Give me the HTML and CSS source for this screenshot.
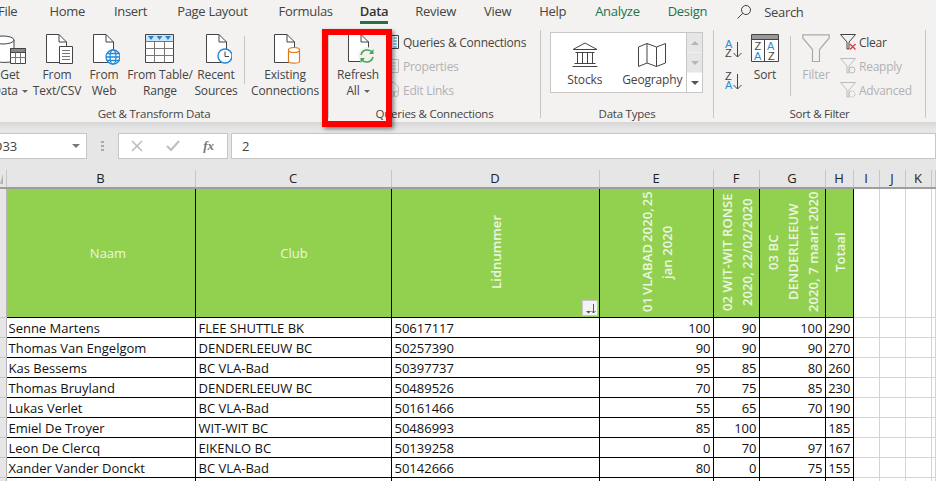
FILE: index.html
```html
<!DOCTYPE html>
<html lang="en">
<head>
  <meta charset="UTF-8">
  <title>Data tab - Excel</title>
  <link rel="stylesheet" href="styles.css">
</head>
<body>

<nav class="tabs">
  <span>File</span>
  <span class="push4">Home</span>
  <span class="push1">Insert</span>
  <span class="push2">Page Layout</span>
  <span class="push3">Formulas</span>
  <span class="active pull1">Data</span>
  <span class="pull1">Review</span>
  <span>View</span>
  <span>Help</span>
  <span class="green push1">Analyze</span>
  <span class="green">Design</span>
  <span class="search">
    <svg width="16" height="16" viewBox="0 0 16 16" fill="none" stroke="#444"><circle cx="10" cy="6" r="4.5"/><path d="M6.700 9.300L1.500 14.500"/></svg>
    Search
  </span>
</nav>

<section class="ribbon">
  <div class="group group-get">
    <div class="group-body">
      <div class="big w-get">
        <svg width="32" height="32" viewBox="0 0 32 32" fill="#fff" stroke="#444">
          <path d="M-1 7V27C4 30 14 30 20 28V7"/><ellipse cx="9" cy="7" rx="11" ry="4"/>
          <path d="M16.500 15.500H31.500V30.500H16.500Z"/><path d="M16.500 15.500H31.500V19.500H16.500Z" fill="#888"/><path d="M16.500 24.500H31.500M21.500 19.500V30.500M26.500 19.500V30.500" stroke="#777"/>
        </svg>
        <span>Get<br>Data <i class="caret"></i></span>
      </div>
      <div class="big w-text">
        <svg width="32" height="32" viewBox="0 0 32 32" fill="#fff" stroke="#444">
          <path d="M5.500 1.500H18L25.500 9V29.500H5.500Z"/><path d="M18 1.500V9H25.500" fill="none"/>
          <path d="M18.500 13.500H31.500V30.500H18.500Z"/><path d="M21 17.500H29M21 20.500H29M21 23.500H29M21 26.500H29" stroke="#777"/>
        </svg>
        <span>From<br>Text/CSV</span>
      </div>
      <div class="big w-web">
        <svg width="32" height="32" viewBox="0 0 32 32" fill="#fff" stroke="#444">
          <path d="M5.500 1.500H18L25.500 9V29.500H5.500Z"/><path d="M18 1.500V9H25.500" fill="none"/>
          <g stroke="#1e88d8" stroke-width="1.300"><circle cx="25" cy="24" r="7"/><ellipse cx="25" cy="24" rx="3" ry="7"/><path d="M18 24H32M19 20.500H31M19 27.500H31"/></g>
        </svg>
        <span>From<br>Web</span>
      </div>
      <div class="big w-table">
        <svg width="32" height="32" viewBox="0 0 32 32" fill="#fff" stroke="#444">
          <path d="M1.500 1.500H29.500V29.500H1.500Z"/><path d="M2 2H29V8H2Z" fill="#cfe6f7" stroke="none"/>
          <path d="M4 3H10L7 7ZM12.500 3H18.500L15.500 7ZM21 3H27L24 7Z" fill="#1e88d8" stroke="none"/>
          <path d="M1.500 8.500H29.500M1.500 15.500H29.500M1.500 22.500H29.500M10.500 8.500V29.500M20.500 8.500V29.500" stroke="#777"/>
        </svg>
        <span>From Table/<br>Range</span>
      </div>
      <div class="big w-recent">
        <svg width="32" height="32" viewBox="0 0 32 32" fill="#fff" stroke="#444">
          <path d="M6.500 1.500H19L26.500 9V29.500H6.500Z"/><path d="M19 1.500V9H26.500" fill="none"/>
          <circle cx="25" cy="23" r="7" stroke="#1e88d8" stroke-width="1.400"/><path d="M25 18.500V23.500H29" fill="none"/>
        </svg>
        <span>Recent<br>Sources</span>
      </div>
      <div class="thin-sep"></div>
      <div class="big w-exist">
        <svg width="32" height="32" viewBox="0 0 32 32" fill="#fff" stroke="#444">
          <path d="M5.500 1.500H18L25.500 9V29.500H5.500Z"/><path d="M18 1.500V9H25.500" fill="none"/>
          <g stroke="#e0781e" stroke-width="1.200"><path d="M19.500 17V29C20.500 30.500 29.500 30.500 30.500 29V17"/><ellipse cx="25" cy="17" rx="5.500" ry="2.500"/></g>
        </svg>
        <span>Existing<br>Connections</span>
      </div>
    </div>
    <div class="group-label">Get &amp; Transform Data</div>
  </div>

  <div class="group group-queries">
    <div class="group-body">
      <div class="big w-refresh">
        <svg width="32" height="32" viewBox="0 0 32 32" fill="#fff" stroke="#444">
          <path d="M6.500 1.500H19L26.500 9V28.500H6.500Z"/><path d="M19 1.500V9H26.500" fill="none"/>
          <circle cx="25" cy="23" r="9" fill="#f3f2f1" stroke="none"/>
          <g fill="none" stroke="#3fa64f" stroke-width="1.500"><path d="M19 22A6.500 6.500 0 0 1 30.500 19.500M31 24A6.500 6.500 0 0 1 19.500 26.500"/></g>
          <path d="M31.500 16V21H27ZM18.500 30V25H23Z" fill="#3fa64f" stroke="none"/>
        </svg>
        <span>Refresh<br>All <i class="caret"></i></span>
      </div>
      <div class="small-col">
        <div class="small">
          <svg width="14" height="14" viewBox="0 0 14 14" fill="#fff" stroke="#444"><path d="M.500 .500H12.500V13.500H.500Z"/><path d="M7.500 3H11M7.500 6H11M7.500 9H11M7.500 12H11" stroke="#1e88d8"/></svg>
          Queries &amp; Connections
        </div>
        <div class="small off">
          <svg width="14" height="14" viewBox="0 0 14 14" fill="none" stroke="#bbb"><path d="M.500 .500H12.500V13.500H.500Z"/><path d="M4 4H10M4 7H10M4 10H10"/></svg>
          Properties
        </div>
        <div class="small off">
          <svg width="14" height="16" viewBox="0 0 14 16" fill="none" stroke="#bbb"><path d="M1.500 .500H8L12.500 5V10M1.500 .500V12"/><circle cx="6" cy="12" r="2.500"/><circle cx="10" cy="12" r="2.500"/></svg>
          Edit Links
        </div>
      </div>
    </div>
    <div class="group-label">Queries &amp; Connections</div>
  </div>

  <div class="group group-types">
    <div class="group-body">
      <div class="gallery">
        <div class="gallery-item">
          <svg width="28" height="26" viewBox="0 0 28 26" fill="none" stroke="#444"><path d="M14 1L26 7.500H2ZM2 7.500H26M4.500 10.500H23.500M6.500 10.500V21M11.500 10.500V21M16.500 10.500V21M21.500 10.500V21M3.500 21.500H24.500M1.500 24.500H26.500"/></svg>
          <span>Stocks</span>
        </div>
        <div class="gallery-item">
          <svg width="30" height="26" viewBox="0 0 30 26" fill="none" stroke="#444"><path d="M1.500 5L10 1.500L19.500 5L28.500 1.500V21L19.500 24.500L10 21L1.500 24.500ZM10 1.500V21M19.500 5V24.500"/></svg>
          <span>Geography</span>
        </div>
        <div class="gallery-scroll">
          <div class="scroll-btn"><i class="up"></i></div>
          <div class="scroll-btn"><i class="down"></i></div>
          <div class="scroll-btn more"><i class="down"></i></div>
        </div>
      </div>
    </div>
    <div class="group-label">Data Types</div>
  </div>

  <div class="group group-sort">
    <div class="group-body">
      <div class="az-col">
        <svg width="20" height="24" viewBox="0 0 20 24"><text x="1" y="10" class="ic-blue">A</text><text x="1" y="19" class="ic-dark">Z</text><path d="M13.500 4V19M9.500 15L13.500 19L17.500 15" fill="none" stroke="#444"/></svg>
        <svg width="20" height="24" viewBox="0 0 20 24"><text x="1" y="9" class="ic-dark">Z</text><text x="1" y="18" class="ic-blue">A</text><path d="M13.500 3V18M9.500 14L13.500 18L17.500 14" fill="none" stroke="#444"/></svg>
      </div>
      <div class="big w-sort">
        <svg width="28" height="28" viewBox="0 0 28 28" fill="#fff" stroke="#444">
          <path d="M.500 .500H27.500V27.500H.500Z"/><path d="M1 1H27V5H1Z" fill="#999" stroke="none"/><path d="M.500 5.500H27.500M13.500 5.500V27.500"/>
          <text x="3.500" y="15.500" class="ic-dark" stroke="none">Z</text><text x="3" y="26" class="ic-blue" stroke="none">A</text>
          <text x="16" y="15.500" class="ic-blue" stroke="none">A</text><text x="17" y="26" class="ic-dark" stroke="none">Z</text>
        </svg>
        <span>Sort</span>
      </div>
      <div class="thin-sep sort-sep"></div>
      <div class="big w-filter off">
        <svg width="28" height="28" viewBox="0 0 28 28" fill="none" stroke="#aaa" stroke-width="1.200"><path d="M.800 .800H27.200V4L17.500 15.500V27.500H10.500V15.500L.800 4Z"/></svg>
        <span>Filter</span>
      </div>
      <div class="small-col filter-col">
        <div class="small">
          <svg width="16" height="16" viewBox="0 0 16 16" fill="none" stroke="#444"><path d="M.500 .500H15.500L9 8V15H7V8Z"/><path d="M10 10L15.500 15.500M15.500 10L10 15.500" stroke="#e03a3a" stroke-width="1.400"/></svg>
          Clear
        </div>
        <div class="small off">
          <svg width="16" height="16" viewBox="0 0 16 16" fill="none" stroke="#bbb"><path d="M.500 .500H15.500L9 8V15H7V8Z"/><circle cx="12" cy="12" r="3"/></svg>
          Reapply
        </div>
        <div class="small off">
          <svg width="16" height="16" viewBox="0 0 16 16" fill="none" stroke="#bbb"><path d="M.500 .500H15.500L9 8V15H7V8Z"/><circle cx="12" cy="12" r="3" stroke-dasharray="2 1"/></svg>
          Advanced
        </div>
      </div>
    </div>
    <div class="group-label">Sort &amp; Filter</div>
  </div>

  <div class="red-box"></div>
</section>

<section class="formula-zone">
  <div class="name-box"><span>D33</span><i class="down"></i></div>
  <div class="dots"></div>
  <div class="fx-box">
    <svg width="12" height="12" viewBox="0 0 12 12" fill="none" stroke="#bdbdbd" stroke-width="1.600"><path d="M1 1L11 11M11 1L1 11"/></svg>
    <svg width="14" height="12" viewBox="0 0 14 12" fill="none" stroke="#bdbdbd" stroke-width="2"><path d="M1 6L5 10L13 1"/></svg>
    <span>fx</span>
  </div>
  <div class="formula-box">2</div>
</section>

<table class="sheet">
  <colgroup>
    <col class="c-row"><col class="c-b"><col class="c-c"><col class="c-d"><col class="c-e"><col class="c-f"><col class="c-g"><col class="c-h"><col class="c-i"><col class="c-j"><col class="c-k"><col>
  </colgroup>
  <thead>
    <tr>
      <th class="corner"><i></i></th><th>B</th><th>C</th><th>D</th><th>E</th><th>F</th><th>G</th><th>H</th><th>I</th><th>J</th><th>K</th><th></th>
    </tr>
  </thead>
  <tbody>
    <tr class="title-row">
      <th></th>
      <td class="flat naam"><div>Naam</div></td>
      <td class="flat club"><div>Club</div></td>
      <td class="up-cell"><div class="up-text"><span>Lidnummer</span></div>
        <div class="filter-btn"><svg width="13" height="13" viewBox="0 0 13 13" fill="none" stroke="#555"><path d="M9.500 2V11M7.500 9L9.500 11L11.500 9"/><path d="M2 9H7L4.500 11.500Z" fill="#555" stroke="none"/></svg></div>
      </td>
      <td class="up-cell"><div class="up-text"><span class="tight">01 VLABAD 2020, 25</span><span>jan 2020</span></div></td>
      <td class="up-cell"><div class="up-text"><span>02 WIT-WIT RONSE</span><span>2020, 22/02/2020</span></div></td>
      <td class="up-cell"><div class="up-text"><span>03 BC</span><span>DENDERLEEUW</span><span>2020, 7 maart 2020</span></div></td>
      <td class="up-cell"><div class="up-text"><span>Totaal</span></div></td>
      <td class="e"></td><td class="e"></td><td class="e"></td><td class="e"></td>
    </tr>
    <tr><th></th><td>Senne Martens</td><td>FLEE SHUTTLE BK</td><td>50617117</td><td class="n">100</td><td class="n">90</td><td class="n">100</td><td class="n">290</td><td class="e"></td><td class="e"></td><td class="e"></td><td class="e"></td></tr>
    <tr><th></th><td>Thomas Van Engelgom</td><td>DENDERLEEUW BC</td><td>50257390</td><td class="n">90</td><td class="n">90</td><td class="n">90</td><td class="n">270</td><td class="e"></td><td class="e"></td><td class="e"></td><td class="e"></td></tr>
    <tr><th></th><td>Kas Bessems</td><td>BC VLA-Bad</td><td>50397737</td><td class="n">95</td><td class="n">85</td><td class="n">80</td><td class="n">260</td><td class="e"></td><td class="e"></td><td class="e"></td><td class="e"></td></tr>
    <tr><th></th><td>Thomas Bruyland</td><td>DENDERLEEUW BC</td><td>50489526</td><td class="n">70</td><td class="n">75</td><td class="n">85</td><td class="n">230</td><td class="e"></td><td class="e"></td><td class="e"></td><td class="e"></td></tr>
    <tr><th></th><td>Lukas Verlet</td><td>BC VLA-Bad</td><td>50161466</td><td class="n">55</td><td class="n">65</td><td class="n">70</td><td class="n">190</td><td class="e"></td><td class="e"></td><td class="e"></td><td class="e"></td></tr>
    <tr><th></th><td>Emiel De Troyer</td><td>WIT-WIT BC</td><td>50486993</td><td class="n">85</td><td class="n">100</td><td class="n"></td><td class="n">185</td><td class="e"></td><td class="e"></td><td class="e"></td><td class="e"></td></tr>
    <tr><th></th><td>Leon De Clercq</td><td>EIKENLO BC</td><td>50139258</td><td class="n">0</td><td class="n">70</td><td class="n">97</td><td class="n">167</td><td class="e"></td><td class="e"></td><td class="e"></td><td class="e"></td></tr>
    <tr><th></th><td>Xander Vander Donckt</td><td>BC VLA-Bad</td><td>50142666</td><td class="n">80</td><td class="n">0</td><td class="n">75</td><td class="n">155</td><td class="e"></td><td class="e"></td><td class="e"></td><td class="e"></td></tr>
    <tr><th></th><td></td><td></td><td></td><td></td><td></td><td></td><td></td><td class="e"></td><td class="e"></td><td class="e"></td><td class="e"></td></tr>
  </tbody>
</table>

</body>
</html>
```

FILE: styles.css
```css
html, body {
  margin: 0;
  height: 481px;
  overflow: hidden;
}

body {
  width: 936px;
  font-family: "Open Sans", sans-serif;
  font-size: 12px;
  color: #444;
  background: #fff;
}

i {
  display: inline-block;
}

svg {
  display: block;
  flex: none;
}

/* tab row */
.tabs {
  display: flex;
  gap: 28px;
  height: 24px;
  margin-left: -2px;
  background: #f3f2f1;
  font-size: 13px;
  letter-spacing: -0.3px;
  line-height: 23px;
  white-space: nowrap;
}

.push1 { margin-left: 1px; }
.push2 { margin-left: 2px; }
.push3 { margin-left: 3px; }
.push4 { margin-left: 4px; }
.pull1 { margin-left: -1px; }

.tabs .active {
  height: 24px;
  box-sizing: border-box;
  border-bottom: 3px solid #217346;
  font-weight: 600;
  color: #333;
}

.tabs .green {
  color: #217346;
}

.tabs .search {
  display: flex;
  align-items: center;
  gap: 12px;
  margin-left: 1px;
}

/* ribbon */
.ribbon {
  position: relative;
  display: flex;
  height: 98px;
  margin-left: -20px;
  background: #f3f2f1;
  letter-spacing: -0.15px;
}

.group {
  display: flex;
  flex-direction: column;
  flex: none;
  box-sizing: border-box;
  height: 88px;
  margin-top: 6px;
  border-right: 1px solid #c8c6c4;
}

.group-body {
  display: flex;
  flex: 1;
}

.group-label {
  height: 16px;
  margin-bottom: -4px;
  line-height: 16px;
  text-align: center;
  font-size: 11.500px;
  letter-spacing: -0.25px;
}

.group-get { width: 349px; }
.group-queries { width: 212px; }
.group-types { width: 173px; }
.group-sort { width: 212px; }

.group-get .group-body { padding-left: 6px; }
.group-queries .group-body { padding-left: 5px; }

.big {
  display: flex;
  flex-direction: column;
  align-items: center;
  flex: none;
  padding-top: 3px;
  white-space: nowrap;
}

.big span {
  margin-top: 2px;
  line-height: 16px;
  text-align: center;
}

.w-get { width: 48px; }
.w-text { width: 46px; }
.w-web { width: 48px; }
.w-table { width: 64px; }
.w-recent { width: 48px; }
.w-exist { width: 72px; }
.w-refresh { width: 48px; }
.w-sort { width: 34px; }
.w-filter { width: 46px; }

.thin-sep {
  width: 1px;
  height: 48px;
  margin: 6px 4px 0;
  background: #c8c6c4;
}

.caret {
  width: 0;
  height: 0;
  margin-left: 1px;
  vertical-align: 2px;
  border: 3px solid transparent;
  border-top: 3px solid #666;
  border-bottom: 0;
}

.small-col {
  display: flex;
  flex-direction: column;
  gap: 4px;
  padding-top: 2px;
  margin-left: 4px;
  letter-spacing: -0.25px;
}

.small {
  display: flex;
  align-items: center;
  gap: 3px;
  height: 20px;
  white-space: nowrap;
}

.off, .off span {
  color: #b1b1b1;
}

.gallery {
  display: flex;
  box-sizing: border-box;
  width: 153px;
  height: 61px;
  margin: 2px 0 0 9px;
  background: #fff;
  border: 1px solid #c8c6c4;
}

.gallery-item {
  display: flex;
  flex-direction: column;
  align-items: center;
  gap: 3px;
  width: 68px;
  padding-top: 9px;
}

.gallery-scroll {
  display: flex;
  flex-direction: column;
  margin-left: auto;
  width: 15px;
  border-left: 1px solid #c8c6c4;
}

.scroll-btn {
  display: flex;
  align-items: center;
  justify-content: center;
  flex: 1;
  background: #e6e6e6;
  border-bottom: 1px solid #f3f2f1;
}

.scroll-btn.more {
  background: #fff;
  border-bottom: 0;
}

.up, .down {
  width: 0;
  height: 0;
  border: 4px solid transparent;
}

.up {
  border-bottom: 4px solid #b5b5b5;
  border-top: 0;
}

.down {
  border-top: 4px solid #b5b5b5;
  border-bottom: 0;
}

.more .down {
  border-top-color: #555;
}

.az-col {
  display: flex;
  flex-direction: column;
  gap: 9px;
  padding: 8px 4px 0 10px;
}

.ic-blue, .ic-dark {
  font-family: "Liberation Sans", sans-serif;
  font-size: 11px;
  letter-spacing: 0;
}

.ic-blue {
  fill: #2b8fd9;
}

.ic-dark {
  fill: #444;
}

.w-sort svg {
  margin-top: 1px;
}

.w-sort span {
  margin-top: 5px;
}

.w-filter svg {
  margin-top: 1px;
}

.w-filter span {
  margin-top: 5px;
}

.sort-sep {
  height: 60px;
  margin: 6px 2px 0 8px;
}

.filter-col {
  margin-left: 1px;
}

/* callout drawn over the ribbon */
.red-box {
  position: absolute;
  left: 342px;
  top: 5px;
  width: 58px;
  height: 86px;
  border: 6px solid #f00;
  box-shadow: 2px 2px 4px rgba(0, 0, 0, 0.45);
}

/* name box + formula bar */
.formula-zone {
  display: flex;
  align-items: center;
  height: 48px;
  box-sizing: border-box;
  padding-top: 11px;
  padding-bottom: 11px;
  background: linear-gradient(#d5d5d5, #e6e6e6 7px);
  font-size: 13px;
}

.name-box, .fx-box, .formula-box {
  box-sizing: border-box;
  height: 26px;
  background: #fff;
  border: 1px solid #c6c6c6;
  display: flex;
  align-items: center;
}

.name-box {
  width: 88px;
  margin-left: -1px;
  justify-content: space-between;
  padding: 0 6px 0 0;
  border-left: 0;
}

.name-box span {
  margin-left: -6px;
}

.name-box .down {
  border-top-color: #777;
}

.dots {
  width: 3px;
  height: 10px;
  margin: 0 14px;
  background: repeating-linear-gradient(#aaa 0 2px, transparent 2px 4px);
}

.fx-box {
  width: 110px;
  justify-content: space-between;
  padding: 0 13px 0 12px;
  margin-right: 3px;
}

.fx-box span {
  font-family: "Liberation Serif", serif;
  font-style: italic;
  font-weight: 700;
  font-size: 13px;
  color: #777;
}

.formula-box {
  flex: 1;
  padding-left: 10px;
}

/* worksheet */
.sheet {
  table-layout: fixed;
  border-collapse: collapse;
  width: 936px;
  font-size: 13px;
  color: #111;
}

.c-row { width: 6px; }
.c-b { width: 189px; }
.c-c { width: 196px; }
.c-d { width: 208px; }
.c-e { width: 114px; }
.c-f { width: 46px; }
.c-g { width: 66px; }
.c-h { width: 28px; }
.c-i { width: 26px; }
.c-j { width: 26px; }
.c-k { width: 26px; }

.sheet thead th {
  height: 17px;
  padding: 0;
  background: #e6e6e6;
  border-right: 1px solid #c6c6c6;
  border-bottom: 2px solid #9e9e9e;
  font-weight: 400;
  font-size: 13px;
  line-height: 17px;
  color: #222;
}

.sheet tbody th {
  padding: 0;
  background: #e6e6e6;
  border-right: 1px solid #b5b5b5;
  border-bottom: 1px solid #c6c6c6;
}

.corner i {
  display: block;
  width: 0;
  height: 0;
  border-left: 3px solid transparent;
  border-right: 0;
  border-bottom: 10px solid #b5b5b5;
}

.sheet td {
  height: 17px;
  padding: 2px 2px 0;
  border: 1px solid #000;
  overflow: hidden;
  white-space: nowrap;
  line-height: 17px;
}

.sheet td:nth-child(3),
.sheet td:nth-child(4) {
  padding-left: 3px;
}

.sheet td.n {
  text-align: right;
}

.sheet td.e {
  border: 0;
  border-right: 1px solid #d4d4d4;
  border-bottom: 1px solid #d4d4d4;
}

.sheet .title-row td {
  height: 128px;
  padding: 0;
  background: #92d050;
  color: #edf6e0;
}

.sheet .title-row td.e {
  background: #fff;
}

.flat {
  text-align: center;
}

.sheet .title-row .naam {
  padding-left: 15px;
}

.sheet .title-row .club {
  padding-left: 2px;
}

.up-cell {
  position: relative;
}

.up-text {
  display: flex;
  flex-direction: column;
  justify-content: center;
  align-items: center;
  width: 100%;
  height: 128px;
  overflow: hidden;
  writing-mode: vertical-rl;
  transform: rotate(180deg);
  font-weight: 600;
  line-height: 20px;
  letter-spacing: 0.1px;
}

.up-text span {
  flex: none;
  padding-top: 2px;
}

.up-text .tight {
  word-spacing: -1.500px;
}

.filter-btn {
  position: absolute;
  right: 1px;
  bottom: 1px;
  box-sizing: border-box;
  width: 16px;
  height: 16px;
  padding: 1px;
  background: #f3f3f3;
  border: 1px solid #c6c6c6;
}
```
